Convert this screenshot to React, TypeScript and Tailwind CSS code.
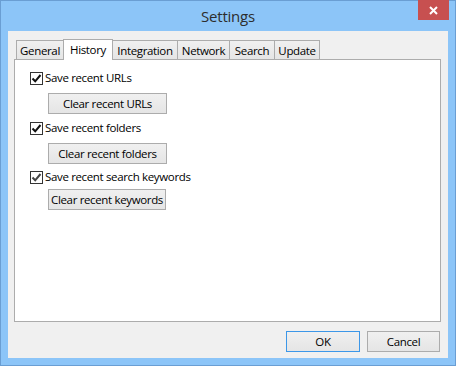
import React from "react";

const font = { fontFamily: '"Open Sans", "Noto Sans", Arial, sans-serif' };

function Check({ label, faded }: { label: string; faded?: boolean }) {
  return (
    <div className="flex items-center h-[14px]">
      <div className="w-[13px] h-[13px] border border-[#333333] bg-white flex items-center justify-center">
        <svg width="11" height="11" viewBox="0 0 11 11">
          <path d="M1.5 5.5 L4.2 8.3 L9.5 2" stroke={faded ? "#444" : "#111"} strokeWidth="2" fill="none" />
        </svg>
      </div>
      <span className="ml-[2px] text-[11.5px] leading-[14px] text-black tracking-[-0.35px] whitespace-nowrap">{label}</span>
    </div>
  );
}

function Btn({ label, className = "" }: { label: string; className?: string }) {
  return (
    <div
      className={
        "h-[21px] border border-[#acacac] bg-gradient-to-b from-[#f0f0f0] to-[#e5e5e5] flex items-center justify-center text-[11.5px] text-black tracking-[-0.35px] whitespace-nowrap " +
        className
      }
    >
      {label}
    </div>
  );
}

const tabs = [
  { name: "General", w: 48 },
  { name: "History", w: 50, sel: true },
  { name: "Integration", w: 66 },
  { name: "Network", w: 53 },
  { name: "Search", w: 46 },
  { name: "Update", w: 46 },
];

export default function App() {
  return (
    <div style={font} className="w-[456px] h-[366px] bg-[#8cc5f8] border border-[#6a9ed3] flex flex-col">
      <div className="h-[30px] relative flex items-center justify-center">
        <span className="text-[15px] text-[#2d2d2d] tracking-[-0.2px] mt-[1px]">Settings</span>
        <div className="absolute right-[6px] top-[-1px] w-[31px] h-[20px] bg-[#c75050] flex items-center justify-center">
          <svg width="9" height="9" viewBox="0 0 9 9">
            <path d="M1 1 L8 8 M8 1 L1 8" stroke="#fff" strokeWidth="2" />
          </svg>
        </div>
      </div>
      <div className="mx-[7px] flex-1 bg-[#f0f0f0] flex flex-col">
        <div className="pl-[6px] pr-[7px] pt-[7px]">
          <div className="flex items-end h-[21px] pl-[2px]">
            {tabs.map((t, i) =>
              t.sel ? (
                <div
                  key={t.name}
                  style={{ width: t.w }}
                  className="-ml-px relative z-10 h-[21px] bg-white border border-[#acacac] border-b-0 text-[11.5px] text-black tracking-[-0.35px] flex justify-center pt-[1px] -mb-px whitespace-nowrap"
                >
                  {t.name}
                </div>
              ) : (
                <div
                  key={t.name}
                  style={{ width: t.w }}
                  className={
                    (i === 0 ? "" : "-ml-px ") +
                    "h-[19px] bg-gradient-to-b from-[#f0f0f0] to-[#e5e5e5] border border-[#acacac] border-b-0 text-[11.5px] text-black tracking-[-0.35px] flex justify-center pt-[1px] whitespace-nowrap"
                  }
                >
                  {t.name}
                </div>
              )
            )}
          </div>
          <div className="h-[263px] bg-white border border-[#acacac] flex flex-col pl-[15px] pt-[11px]">
            <Check label="Save recent URLs" />
            <Btn label="Clear recent URLs" className="w-[119px] ml-[18px] mt-[8px]" />
            <div className="mt-[7px]">
              <Check label="Save recent folders" />
            </div>
            <Btn label="Clear recent folders" className="w-[119px] ml-[18px] mt-[8px]" />
            <div className="mt-[6px]">
              <Check label="Save recent search keywords" faded />
            </div>
            <Btn label="Clear recent keywords" className="w-[118px] ml-[18px] mt-[5px]" />
          </div>
        </div>
        <div className="flex justify-end gap-[7px] pr-[8px] mt-[9px]">
          <Btn label="OK" className="w-[74px] !border-[#3c97e8]" />
          <Btn label="Cancel" className="w-[73px]" />
        </div>
      </div>
      <div className="h-[7px]" />
    </div>
  );
}
